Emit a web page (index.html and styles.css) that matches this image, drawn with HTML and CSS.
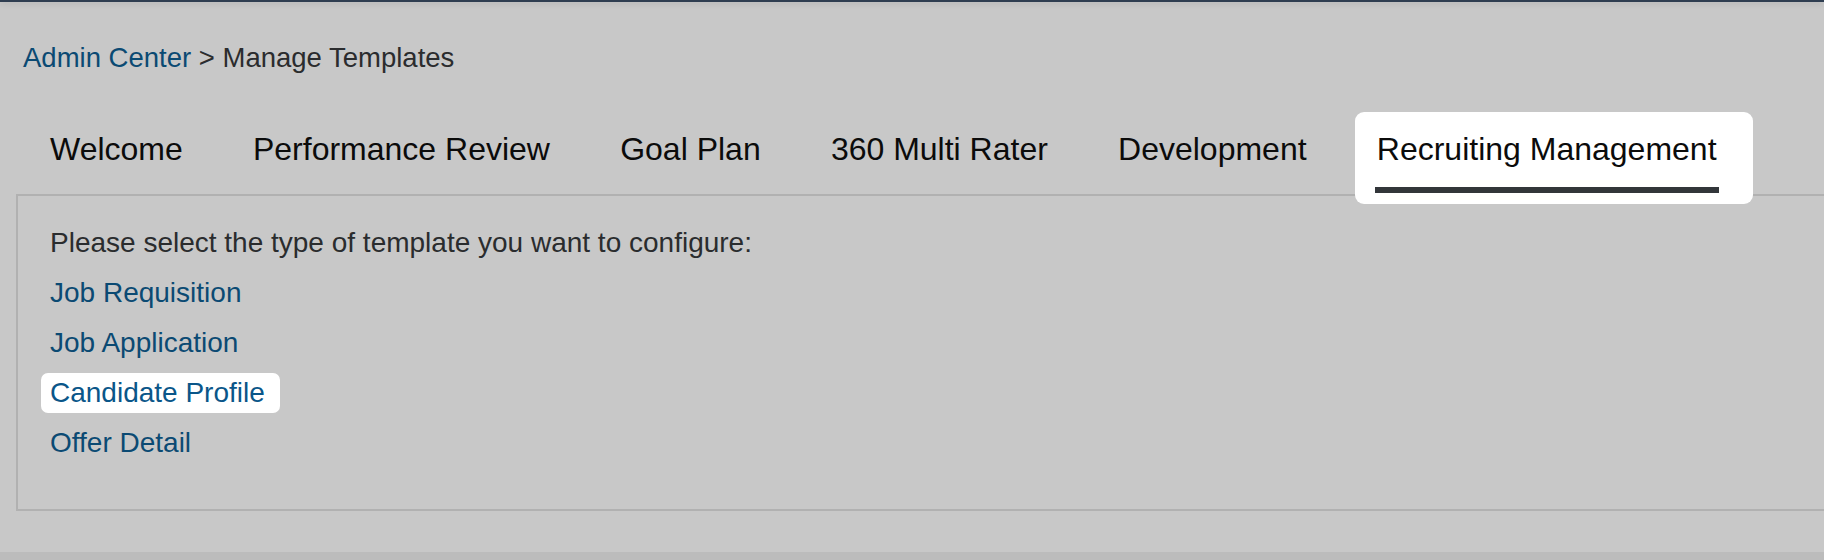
FILE: index.html
```html
<!DOCTYPE html>
<html lang="en">
<head>
<meta charset="utf-8">
<title>Manage Templates</title>
<link rel="stylesheet" href="styles.css">
</head>
<body>
<div class="shell-bar"></div>
<main class="page">
  <nav class="breadcrumb"><a class="crumb-link" href="#">Admin Center</a> &gt; Manage Templates</nav>
  <div class="tabs">
    <div class="tab">Welcome</div>
    <div class="tab">Performance Review</div>
    <div class="tab">Goal Plan</div>
    <div class="tab">360 Multi Rater</div>
    <div class="tab">Development</div>
    <div class="tab active">Recruiting Management</div>
  </div>
  <section class="panel">
    <p class="intro">Please select the type of template you want to configure:</p>
    <a class="tpl-link" href="#">Job Requisition</a>
    <a class="tpl-link" href="#">Job Application</a>
    <a class="tpl-link"  href="#"><span class="highlight">Candidate Profile</span></a>
    <a class="tpl-link" href="#">Offer Detail</a>
  </section>
</main>
<div class="footer-strip"></div>
</body>
</html>
```

FILE: styles.css
```css
* { box-sizing: border-box; }

html, body {
  margin: 0;
  padding: 0;
  height: 560px;
  overflow: hidden;
}

body {
  background: #c8c8c8;
  font-family: "Liberation Sans", Arial, sans-serif;
  display: flex;
  flex-direction: column;
}

.shell-bar {
  height: 2px;
  background: #2f3e51;
  box-shadow: 0 2px 5px rgba(0, 0, 0, 0.12);
  flex: none;
}

.page {
  flex: 1;
  display: flex;
  flex-direction: column;
}

.breadcrumb {
  margin-top: 39px;
  padding-left: 23px;
  font-size: 27.5px;
  line-height: 34px;
  color: #2b2c2e;
}

.crumb-link {
  color: #0b4a73;
  text-decoration: none;
}

.tabs {
  display: flex;
  gap: 70.2px;
  padding-left: 50px;
  margin-top: 54px;
  position: relative;
  z-index: 1;
}

.tab {
  position: relative;
  z-index: 0;
  font-size: 32px;
  line-height: 40px;
  padding-bottom: 25px;
  color: #0b0b0b;
  white-space: nowrap;
}

.tab.active::before {
  content: "";
  position: absolute;
  left: -22px;
  right: -36px;
  top: -17px;
  bottom: -10px;
  background: #ffffff;
  border-radius: 9px;
  z-index: -1;
}

.tab.active::after {
  content: "";
  position: absolute;
  left: -2px;
  right: -2px;
  bottom: 1px;
  height: 6px;
  background: #32363a;
}

.panel {
  margin-left: 16px;
  border-top: 2px solid #b1b1b1;
  border-left: 2px solid #b1b1b1;
  border-bottom: 2px solid #b1b1b1;
  padding: 22px 0 41px 32px;
  display: flex;
  flex-direction: column;
  align-items: flex-start;
}

.intro {
  margin: 0;
  font-size: 28px;
  line-height: 50px;
  color: #2a2c2e;
}

.tpl-link {
  font-size: 28px;
  line-height: 50px;
  color: #0b4a73;
  text-decoration: none;
}

.highlight {
  position: relative;
  z-index: 0;
  color: #0a5689;
}

.highlight::before {
  content: "";
  position: absolute;
  left: -9px;
  right: -15px;
  top: -4px;
  bottom: -5px;
  background: #ffffff;
  border-radius: 7px;
  z-index: -1;
}

.footer-strip {
  height: 8px;
  background: #bcbcbc;
  flex: none;
}
```
